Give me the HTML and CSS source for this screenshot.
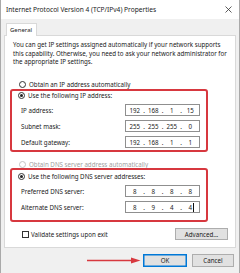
FILE: index.html
```html
<!DOCTYPE html>
<html>
<head>
<meta charset="utf-8">
<link rel="stylesheet" href="styles.css">
</head>
<body>
<div class="window">
  <div class="titlebar">
    <span class="title">Internet Protocol Version 4 (TCP/IPv4) Properties</span>
    <svg class="close" width="7" height="7" viewBox="0 0 7 7"><path d="M0.5 0.5 L6.5 6.5 M6.5 0.5 L0.5 6.5" stroke="#333" stroke-width="0.8" fill="none"/></svg>
  </div>
  <div class="tabs"><div class="tab">General</div></div>
  <div class="panel">
    <p class="desc">You can get IP settings assigned automatically if your network supports this capability. Otherwise, you need to ask your network administrator for the appropriate IP settings.</p>

    <div class="radio-row obtain"><span class="radio"></span><span>Obtain an IP address automatically</span></div>

    <div class="group">
      <div class="redbox first">
        <div class="radio-row"><span class="radio on"></span><span class="legend">Use the following IP address:</span></div>
        <div class="field-row first-row"><span class="label">IP address:</span><div class="ip"><span>192</span><i>.</i><span>168</span><i>.</i><span>1</span><i>.</i><span>15</span></div></div>
        <div class="field-row"><span class="label">Subnet mask:</span><div class="ip"><span>255</span><i>.</i><span>255</span><i>.</i><span>255</span><i>.</i><span>0</span></div></div>
        <div class="field-row"><span class="label">Default gateway:</span><div class="ip"><span>192</span><i>.</i><span>168</span><i>.</i><span>1</span><i>.</i><span>1</span></div></div>
      </div>
    </div>

    <div class="radio-row obtain-dns disabled"><span class="radio"></span><span>Obtain DNS server address automatically</span></div>

    <div class="group">
      <div class="redbox second">
        <div class="radio-row"><span class="radio on"></span><span class="legend">Use the following DNS server addresses:</span></div>
        <div class="field-row first-row"><span class="label">Preferred DNS server:</span><div class="ip"><span>8</span><i>.</i><span>8</span><i>.</i><span>8</span><i>.</i><span>8</span></div></div>
        <div class="field-row"><span class="label">Alternate DNS server:</span><div class="ip"><span>8</span><i>.</i><span>9</span><i>.</i><span>4</span><i>.</i><span class="caret">4</span></div></div>
      </div>
    </div>

    <div class="validate-row">
      <span class="check"></span><span class="validate-text">Validate settings upon exit</span>
      <span class="btn advanced">Advanced...</span>
    </div>
  </div>
  <div class="button-row">
    <svg class="arrow" width="54" height="7" viewBox="0 0 54 7"><path d="M0 3.5 H46" stroke="#d7383f" stroke-width="1.6"/><path d="M44 0.5 L53.5 3.5 L44 6.5 Z" fill="#d7383f"/></svg>
    <span class="btn ok">OK</span>
    <span class="btn cancel">Cancel</span>
  </div>
</div>
</body>
</html>
```
FILE: styles.css
```css
* { box-sizing: border-box; }
html, body { margin: 0; padding: 0; }
body {
  width: 240px;
  height: 273px;
  overflow: hidden;
  font-family: "Noto Sans", "Open Sans", sans-serif;
  font-size: 6.2px;
  color: #1a1a1a;
  background: #f0f0f0;
}
.window {
  width: 240px;
  height: 273px;
  border-left: 1px solid #a9a9a9;
  border-right: 1px solid #a9a9a9;
  background: #f0f0f0;
}
.titlebar {
  height: 19px;
  background: #fff;
  display: flex;
  align-items: center;
  justify-content: space-between;
  padding: 0 7px 1px 5px;
}
.title { font-size: 6.6px; color: #1a1a1a; }
.close { display: block; }
.tabs {
  padding: 4px 0 0 5px;
  display: flex;
}
.tab {
  position: relative;
  height: 13px;
  width: 31px;
  margin-bottom: -1px;
  background: #fff;
  border: 1px solid #d9d9d9;
  border-bottom: none;
  font-size: 6px;
  display: flex;
  align-items: center;
  padding-left: 3px;
}
.panel {
  margin: 0 3px;
  height: 213px;
  background: #fff;
  border: 1px solid #d9d9d9;
  padding: 5px 7px 0 5px;
}
.desc {
  margin: 0 0 0 3px;
  line-height: 8.5px;
}
.radio-row {
  height: 8px;
  display: flex;
  align-items: center;
  padding-left: 9px;
}
.obtain { margin-top: 13.5px; }
.obtain-dns { margin-top: 8px; }
.radio {
  width: 7px;
  height: 7px;
  border: 1px solid #333;
  border-radius: 50%;
  margin-right: 3px;
  flex: none;
  display: flex;
  align-items: center;
  justify-content: center;
  background: #fff;
}
.radio.on::after {
  content: "";
  width: 3px;
  height: 3px;
  border-radius: 50%;
  background: #222;
}
.disabled { color: #a0a0a0; }
.disabled .radio { border-color: #c4c4c4; }
.group { position: relative; }
.redbox {
  position: relative;
  margin-left: 0;
  width: 198px;
  border: 2px solid #d7383f;
  border-radius: 3px;
}
.redbox::before {
  content: "";
  position: absolute;
  left: -2px;
  top: 4px;
  right: -21px;
  bottom: 2px;
  border: 1px solid #dcdcdc;
  border-left: none;
  border-radius: 1px;
  z-index: -1;
}
.redbox.first { margin-top: 1px; padding-bottom: 2px; }
.redbox.second { padding-top: 2px; padding-bottom: 7px; }
.redbox .radio-row { padding-left: 6px; }
.legend { background: #fff; padding-right: 2px; }
.field-row {
  height: 12px;
  display: flex;
  align-items: center;
  margin-top: 4px;
}
.field-row.first-row { margin-top: 5px; }
.label { width: 113px; padding-left: 9px; flex: none; }
.ip {
  width: 75px;
  height: 12px;
  border: 1px solid #8f8f8f;
  display: flex;
  align-items: center;
  padding: 0 2px;
  background: #fff;
}
.ip span { flex: 1; text-align: center; }
.ip i { font-style: normal; width: 5px; text-align: center; }
.caret { position: relative; }
.caret::after {
  content: "";
  position: absolute;
  right: 3px;
  top: 0;
  width: 1px;
  height: 9px;
  background: #111;
}
.validate-row {
  margin-top: 6px;
  height: 12px;
  display: flex;
  align-items: center;
}
.check {
  width: 7px;
  height: 7px;
  border: 1px solid #333;
  margin-left: 12px;
  margin-right: 2px;
}
.validate-text { flex: 1; }
.btn {
  display: flex;
  align-items: center;
  justify-content: center;
  background: #e1e1e1;
  border: 1px solid #adadad;
  height: 13px;
}
.advanced { width: 53px; height: 12px; margin-right: 0; }
.button-row {
  margin-top: 6px;
  display: flex;
  align-items: center;
  justify-content: flex-end;
  padding-right: 5px;
}
.arrow { display: block; margin-right: 2px; }
.ok { width: 44px; border: 1px solid #0078d7; box-shadow: inset 0 0 0 0.5px #0078d7; }
.cancel { width: 42px; margin-left: 5px; }
```
